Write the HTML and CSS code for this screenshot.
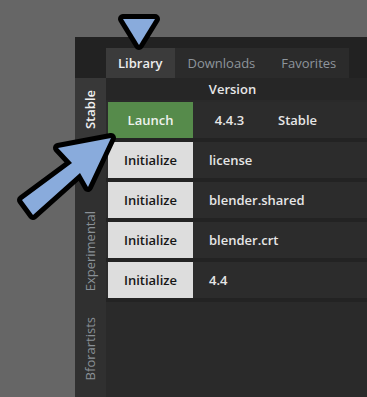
FILE: index.html
```html
<!DOCTYPE html>
<html lang="en">
<head>
    <meta charset="UTF-8">
    <meta name="viewport" content="width=device-width, initial-scale=1.0">
    <title>Library</title>
    <link rel="stylesheet" href="styles.css">
</head>
<body>
    <div class="panel">
        <div class="topbar">
            <div class="corner"></div>
            <div class="tabs">
                <div class="tab active">Library</div>
                <div class="tab">Downloads</div>
                <div class="tab">Favorites</div>
            </div>
        </div>

        <div class="main">
            <div class="sidebar">
                <div class="side-tab active stable"><span>Stable</span></div>
                <div class="side-tab experimental"><span>Experimental</span></div>
                <div class="side-tab bforartists"><span>Bforartists</span></div>
            </div>

            <div class="content">
                <div class="header-row">
                    <div class="col-btn"></div>
                    <div class="col-version">Version</div>
                </div>

                <div class="row">
                    <button class="btn launch">Launch</button>
                    <div class="col-version">4.4.3</div>
                    <div class="col-branch">Stable</div>
                </div>
                <div class="row">
                    <button class="btn init">Initialize</button>
                    <div class="col-name">license</div>
                </div>
                <div class="row">
                    <button class="btn init">Initialize</button>
                    <div class="col-name">blender.shared</div>
                </div>
                <div class="row">
                    <button class="btn init">Initialize</button>
                    <div class="col-name">blender.crt</div>
                </div>
                <div class="row">
                    <button class="btn init">Initialize</button>
                    <div class="col-name">4.4</div>
                </div>
            </div>
        </div>
    </div>

    <!-- callout arrows drawn over the window -->
    <svg class="callouts" width="367" height="397" viewBox="0 0 367 397">
        <polygon class="pointer" points="123,19 155,19 139,45"/>
        <polygon class="pointer" points="111,138 88,187 80,173 33,215 22,200 72,163 58,148"/>
    </svg>
</body>
</html>
```

FILE: styles.css
```css
html, body {
    height: 100%;
}

body {
    margin: 0;
    background-color: #666666;
    font-family: 'Open Sans', 'Noto Sans', sans-serif;
    font-size: 13px;
    font-weight: 600;
    color: #e6e6e6;
    overflow: hidden;
}

.panel {
    margin: 37px 0 0 75px;
    height: calc(100% - 37px);
    padding-top: 11px;
    box-sizing: border-box;
    background-color: #222222;
    display: flex;
    flex-direction: column;
}

.topbar {
    display: flex;
    height: 30px;
}

.corner {
    width: 31px;
}

.tabs {
    display: flex;
    background-color: #2b2b2b;
}

.tab {
    padding: 0 13px;
    line-height: 30px;
    color: #8e959c;
    font-weight: 500;
}

.tab.active {
    padding: 0 12px;
    background-color: #3b3b3b;
    color: #ececec;
    font-weight: 600;
}

.main {
    flex: 1;
    display: flex;
}

.sidebar {
    width: 31px;
    background-color: #303030;
    display: flex;
    flex-direction: column;
    align-items: stretch;
}

.side-tab {
    display: flex;
    justify-content: center;
    padding: 12px 0;
    color: #8a9097;
    font-weight: 500;
}

.side-tab span {
    writing-mode: vertical-rl;
    transform: rotate(180deg);
    line-height: 31px;
}

.side-tab.active {
    background-color: #383838;
    color: #f0f0f0;
    font-weight: 600;
}

.experimental {
    margin-top: 58px;
}

.bforartists {
    margin-top: 2px;
}

.content {
    flex: 1;
    background-color: #2a2a2a;
}

.header-row {
    display: flex;
    height: 22px;
    line-height: 22px;
    background-color: #262626;
    margin-bottom: 2px;
}

.col-btn {
    width: 87px;
}

.col-version {
    width: 79px;
    text-align: center;
}

.row .col-version {
    padding-right: 6px;
    box-sizing: border-box;
}

.col-branch {
    padding-left: 6px;
}

.col-name {
    padding-left: 16px;
}

.row {
    display: flex;
    align-items: center;
    height: 36px;
    background-color: #2c2c2c;
    border-bottom: 4px solid #232323;
}

.btn {
    margin-left: 2px;
    width: 85px;
    height: 36px;
    border: none;
    padding: 0;
    font-family: inherit;
    font-size: 13px;
    font-weight: 600;
}

.btn.launch {
    background-color: #568b4b;
    color: #eef2ee;
}

.btn.init {
    background-color: #dddddd;
    color: #161616;
}

.callouts {
    position: fixed;
    top: 0;
    left: 0;
    pointer-events: none;
}

.pointer {
    fill: #89abdc;
    stroke: #000000;
    stroke-width: 10;
    stroke-linejoin: round;
    paint-order: stroke;
}
```
